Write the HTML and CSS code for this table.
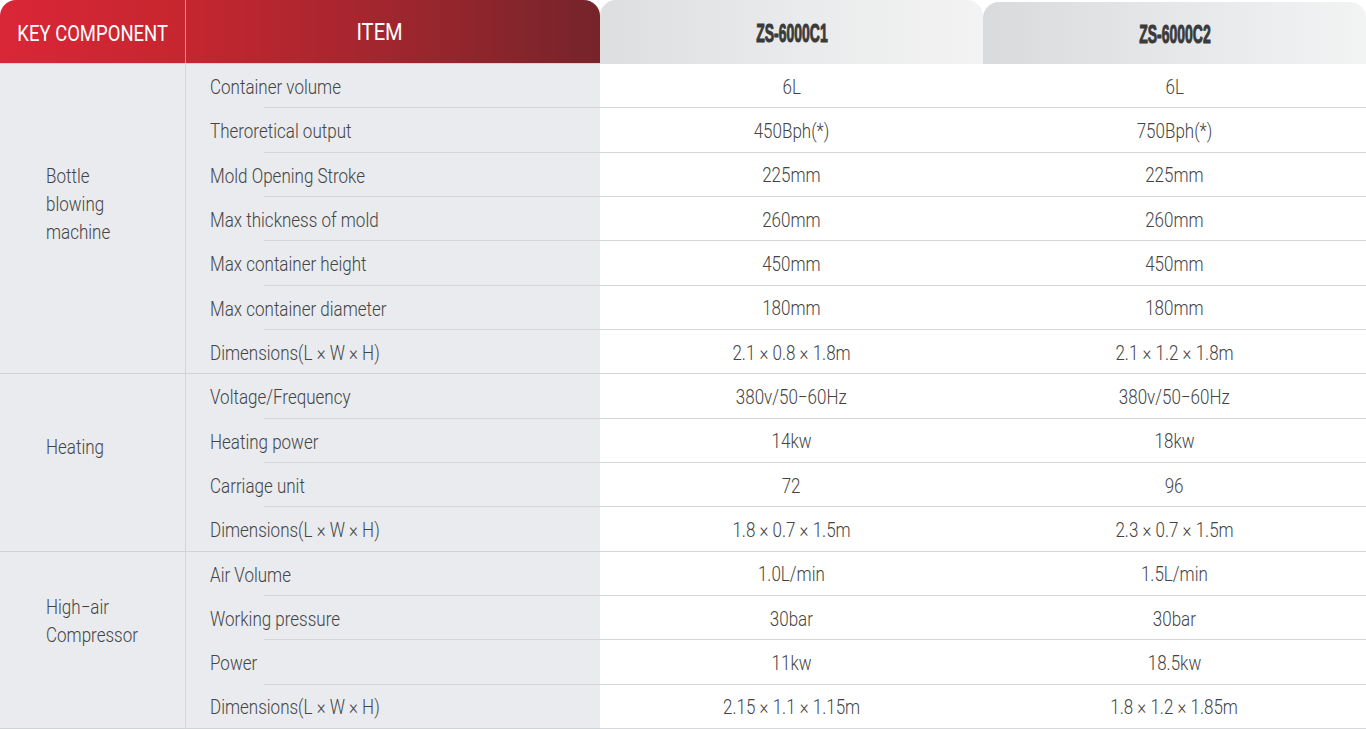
FILE: index.html
```html
<!DOCTYPE html>
<html>
<head>
<meta charset="utf-8">
<link rel="stylesheet" href="styles.css">
</head>
<body>
<div class="sheet">
  <div class="head-red">
    <div class="hcell key-h"><span>KEY COMPONENT</span></div>
    <div class="hcell item-h"><span>ITEM</span></div>
  </div>
  <div class="model m1"><span>ZS-6000C1</span></div>
  <div class="model m2"><span>ZS-6000C2</span></div>

  <div class="key g1"><span>Bottle<br>blowing<br>machine</span></div>
  <div class="item"><span>Container volume</span></div><div class="val"><span>6L</span></div><div class="val"><span>6L</span></div>
  <div class="item"><span>Theroretical output</span></div><div class="val"><span>450Bph(*)</span></div><div class="val"><span>750Bph(*)</span></div>
  <div class="item"><span>Mold Opening Stroke</span></div><div class="val"><span>225mm</span></div><div class="val"><span>225mm</span></div>
  <div class="item"><span>Max thickness of mold</span></div><div class="val"><span>260mm</span></div><div class="val"><span>260mm</span></div>
  <div class="item"><span>Max container height</span></div><div class="val"><span>450mm</span></div><div class="val"><span>450mm</span></div>
  <div class="item"><span>Max container diameter</span></div><div class="val"><span>180mm</span></div><div class="val"><span>180mm</span></div>
  <div class="item end"><span>Dimensions(L × W × H)</span></div><div class="val"><span>2.1 × 0.8 × 1.8m</span></div><div class="val"><span>2.1 × 1.2 × 1.8m</span></div>

  <div class="key g2"><span>Heating</span></div>
  <div class="item"><span>Voltage/Frequency</span></div><div class="val"><span>380v/50−60Hz</span></div><div class="val"><span>380v/50−60Hz</span></div>
  <div class="item"><span>Heating power</span></div><div class="val"><span>14kw</span></div><div class="val"><span>18kw</span></div>
  <div class="item"><span>Carriage unit</span></div><div class="val"><span>72</span></div><div class="val"><span>96</span></div>
  <div class="item end"><span>Dimensions(L × W × H)</span></div><div class="val"><span>1.8 × 0.7 × 1.5m</span></div><div class="val"><span>2.3 × 0.7 × 1.5m</span></div>

  <div class="key g3"><span>High−air<br>Compressor</span></div>
  <div class="item"><span>Air Volume</span></div><div class="val"><span>1.0L/min</span></div><div class="val"><span>1.5L/min</span></div>
  <div class="item"><span>Working pressure</span></div><div class="val"><span>30bar</span></div><div class="val"><span>30bar</span></div>
  <div class="item"><span>Power</span></div><div class="val"><span>11kw</span></div><div class="val"><span>18.5kw</span></div>
  <div class="item end"><span>Dimensions(L × W × H)</span></div><div class="val"><span>2.15 × 1.1 × 1.15m</span></div><div class="val"><span>1.8 × 1.2 × 1.85m</span></div>
</div>
</body>
</html>
```

FILE: styles.css
```css
* { box-sizing: border-box; }
html, body { margin: 0; padding: 0; background: #ffffff; }
body {
  font-family: Roboto, "Liberation Sans", sans-serif;
  font-weight: 300;
  color: #444444;
}
.sheet {
  display: grid;
  grid-template-columns: 186px 414px 383px 383px;
  grid-template-rows: 64px repeat(15, 1fr);
  width: 1366px;
  height: 729px;
  overflow: hidden;
}
.sheet span {
  display: inline-block;
  white-space: nowrap;
}
.head-red {
  grid-column: 1 / 3;
  grid-row: 1;
  display: grid;
  grid-template-columns: 186px 1fr;
  border-radius: 16px 16px 0 0;
  background: linear-gradient(90deg, #da2638 0%, #c6262f 30%, #a6262f 60%, #75242a 100%);
  color: #ffffff;
  border-bottom: 1px solid #e8c9cc;
}
.hcell {
  display: flex;
  align-items: center;
  justify-content: center;
}
.key-h {
  font-size: 22px;
  font-weight: 400;
  border-right: 1px solid #e48b93;
  padding-top: 3px;
}
.key-h span { transform: scaleX(0.84); }
.item-h {
  font-size: 24px;
  font-weight: 400;
  padding-right: 26px;
  padding-top: 1px;
}
.item-h span { transform: scaleX(0.84); }
.model {
  grid-row: 1;
  display: flex;
  align-items: center;
  justify-content: center;
  border-radius: 16px 16px 0 0;
  color: #3a3a3a;
}
.model span {
  font-family: "Liberation Sans", sans-serif;
  font-weight: 700;
  font-size: 25px;
  transform: scaleX(0.56);
  -webkit-text-stroke: 1px #3a3a3a;
  padding-top: 2px;
}
.m1 {
  grid-column: 3;
  background: linear-gradient(90deg, #dddee0 0%, #e9eaeb 50%, #f3f3f3 100%);
}
.m2 {
  grid-column: 4;
  margin-top: 2px;
  background: linear-gradient(90deg, #d9dadc 0%, #e6e7e9 50%, #f2f3f3 100%);
}
.key {
  grid-column: 1;
  background: #e9ebee;
  border-right: 1px solid #d3d5d8;
  border-bottom: 1px solid #d0d3d6;
  display: flex;
  align-items: center;
  padding-left: 46px;
  font-size: 20px;
  line-height: 28px;
}
.key span { transform: scaleX(0.85); transform-origin: left center; }
.g1 { grid-row: 2 / span 7; padding-bottom: 30px; }
.g2 { grid-row: 9 / span 4; padding-bottom: 30px; }
.g3 { grid-row: 13 / span 4; padding-bottom: 38px; }
.item {
  grid-column: 2;
  background: #e9ebee linear-gradient(#d3d5d8, #d3d5d8) no-repeat right bottom / calc(100% - 78px) 1px;
  display: flex;
  align-items: center;
  padding-left: 24px;
  padding-top: 2px;
  font-size: 20px;
}
.item span { transform: scaleX(0.85); transform-origin: left center; }
.item.end {
  background: #e9ebee;
  border-bottom: 1px solid #d0d3d6;
}
.val {
  display: flex;
  align-items: center;
  justify-content: center;
  padding-top: 2px;
  font-size: 20px;
  border-bottom: 1px solid #d6d8db;
  background: #ffffff;
}
.val span { transform: scaleX(0.85); }
```
